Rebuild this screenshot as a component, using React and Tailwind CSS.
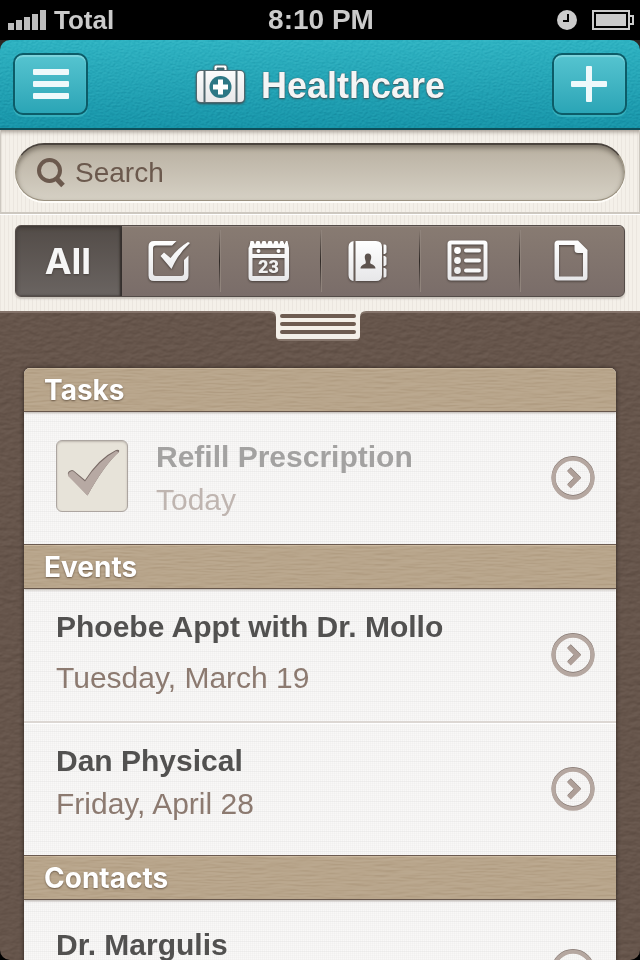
import React, { useState } from 'react';

const STRIPES = "bg-[#f4f0e9] bg-[repeating-linear-gradient(90deg,#ebe6df_0px,#ebe6df_1px,#f4f0e9_1px,#f4f0e9_4px)]";
const LINEN = "bg-[#f9f8f7] bg-[repeating-linear-gradient(0deg,#8080800c_0px,#8080800c_1px,transparent_1px,transparent_10px),repeating-linear-gradient(90deg,#80808009_0px,#80808009_1px,transparent_1px,transparent_2px),repeating-linear-gradient(0deg,#80808009_0px,#80808009_1px,transparent_1px,transparent_2px)]";

// Grain laid over a flat panel colour
const Grain = ({ id, freq, className }) => (
  <svg className={`absolute inset-0 w-full h-full pointer-events-none ${className}`} aria-hidden="true">
    <filter id={id} x="0" y="0" width="100%" height="100%" colorInterpolationFilters="sRGB">
      <feTurbulence type="fractalNoise" baseFrequency={freq} numOctaves="3" seed="4" />
      <feDiffuseLighting lightingColor="#ffffff" surfaceScale="1.5">
        <feDistantLight azimuth="70" elevation="30" />
      </feDiffuseLighting>
    </filter>
    <rect width="100%" height="100%" filter={`url(#${id})`} />
  </svg>
);

const IconDefs = () => (
  <svg className="absolute w-0 h-0" aria-hidden="true">
    <defs>
      <linearGradient id="ink" gradientUnits="userSpaceOnUse" x1="0" y1="0" x2="0" y2="42">
        <stop offset="0" stopColor="#ffffff" />
        <stop offset="1" stopColor="#e6e6e8" />
      </linearGradient>
    </defs>
  </svg>
);

const StatusBar = () => (
  <div className="grid grid-cols-3 items-center h-10 shrink-0 pl-2 pr-1.5 bg-black text-[#cbcbcb] font-bold">
    <div className="flex items-center gap-2">
      <svg width="38" height="20" viewBox="0 0 38 20" fill="#bdbdbd">
        <path d="M0 13h6v7H0zM8 10h6v10H8zM16 7h6v13h-6zM24 4h6v16h-6zM32 0h6v20h-6z" />
      </svg>
      <span className="text-[26px] leading-10">Total</span>
    </div>
    <span className="text-[28px] leading-10 text-center whitespace-nowrap">8:10 PM</span>
    <div className="flex items-center justify-end gap-[15px]">
      <svg width="20" height="20" viewBox="0 0 20 20">
        <circle cx="10" cy="10" r="10" fill="#cbcbcb" />
        <path d="M11 4v7H6" fill="none" stroke="#000" strokeWidth="2" />
      </svg>
      <svg width="42" height="20" viewBox="0 0 42 20">
        <path d="M1 1h36v5h4v8h-4v5H1z" fill="none" stroke="#cbcbcb" strokeWidth="2" />
        <path d="M37 6v8" stroke="#cbcbcb" strokeWidth="2" />
        <path d="M4 4h30v12H4z" fill="#cbcbcb" />
      </svg>
    </div>
  </div>
);

const HeaderButton = ({ label, onClick, children }) => (
  <button
    type="button"
    aria-label={label}
    onClick={onClick}
    className="relative flex items-center justify-center w-[75px] h-[62px] rounded-[10px] border-2 border-[#0c5c68] bg-linear-to-b from-[#55c4d0] to-[#2aa5b6] shadow-[inset_0_2px_1px_#7fd5dd,0_2px_0_#35b0be]"
  >
    {children}
  </button>
);

const Header = () => (
  <div className="bg-[#2b2522] shrink-0">
    <header className="relative flex items-center justify-between h-[90px] px-[13px] rounded-t-[10px] border-b-2 border-[#0d4f5a] overflow-hidden bg-linear-to-b from-[#2fb3c2] to-[#1795a9]">
      <Grain id="cloth" freq="0.4 0.6" className="mix-blend-soft-light opacity-20" />
      <HeaderButton label="Menu">
        <svg width="36" height="30" viewBox="0 0 36 30" fill="#eef9fb">
          <rect width="36" height="6" rx="1" />
          <rect y="12" width="36" height="6" rx="1" />
          <rect y="24" width="36" height="6" rx="1" />
        </svg>
      </HeaderButton>
      <h1 className="relative flex items-center gap-3.5 text-4xl font-bold text-[#f4f5f5] [text-shadow:0_1px_2px_#3b4a50,0_0_1px_#3b4a50]">
        <svg width="52" height="40" viewBox="0 0 52 40" className="drop-shadow-[0_1px_1px_#3b4a50]">
          <path d="M19 8V3q0-2 2-2h9q2 0 2 2v5h-3V4h-7v4z" fill="#fff" stroke="#496a72" strokeWidth="1" />
          <rect x="1" y="6" width="49" height="33" rx="5" fill="#52676e" />
          <path d="M8.500 7v31H6Q2 38 2 34V11q0-4 4-4zM42.500 7v31H45q4 0 4-4V11q0-4-4-4z" fill="url(#ink)" />
          <path d="M10.500 7h30v31h-30z" fill="url(#ink)" />
          <circle cx="25.500" cy="23" r="11" fill="#2c7785" />
          <path d="M23 15.500h5v5h5v5h-5v5h-5v-5h-5v-5h5z" fill="#fff" />
        </svg>
        <span className="pt-1">Healthcare</span>
      </h1>
      <HeaderButton label="Add">
        <svg width="36" height="36" viewBox="0 0 36 36" fill="#eef9fb">
          <rect x="15" width="6" height="36" rx="1" />
          <rect y="15" width="36" height="6" rx="1" />
        </svg>
      </HeaderButton>
    </header>
  </div>
);

const SearchBar = () => {
  const [query, setQuery] = useState("");

  return (
    <div className={`px-3.5 pt-[13px] pb-[11px] shrink-0 border-x border-b-2 border-[#cdc8c0] shadow-[inset_0_5px_4px_-3px_#a39b92] ${STRIPES}`}>
      <label className="flex items-center gap-2.5 h-[58px] pl-[21px] pr-5 rounded-full border border-t-2 border-[#99907f] border-t-[#4b443e] bg-linear-to-b from-[#b9b0a1] to-[#d5d0c4] shadow-[inset_0_3px_5px_#7c7468,0_2px_0_#fffdf9]">
        <svg width="28" height="30" viewBox="0 0 28 30" fill="none" stroke="#6b594d" className="shrink-0">
          <circle cx="12.500" cy="12.500" r="10.500" strokeWidth="4" />
          <path d="M19 20l7 7.500" strokeWidth="5" />
        </svg>
        <input
          type="search"
          aria-label="Search"
          placeholder="Search"
          className="w-full bg-transparent text-[28px] leading-9 text-[#6b594d] placeholder:text-[#6b594d] outline-none appearance-none"
          value={query}
          onChange={e => setQuery(e.target.value)}
        />
      </label>
    </div>
  );
};

const TaskIcon = () => (
  <svg width="42" height="42" viewBox="0 0 42 42">
    <path d="M28.500 1L24 5.500H8Q5 5.500 5 8.500v24.500q0 3 3 3h25q3 0 3-3V20l4.500-4.500v20q0 5.500-5.500 5.500H6Q.5 41 .5 35.500V6.500Q.5 1 6 1z" fill="url(#ink)" />
    <path d="M12.500 16l3.500-3.500 6.500 5.500Q30 8 40 2l2 1Q30.500 13 23.500 29z" fill="url(#ink)" />
  </svg>
);

const CalendarIcon = () => (
  <svg width="42" height="42" viewBox="0 0 42 42">
    <path d="M1.500 6l1-5h3l1.500 3.500L8.500 1h3L13 4.500 14.500 1h3L19 4.500 20.500 1h3L25 4.500 26.500 1h3L31 4.500 32.500 1h2.500l1.500 3.500L38 1h1.500l1.500 7v29q0 4-4 4H4.500q-4 0-4-4V8zM4.500 8v6h32V8zM4.500 18v18h32V18z" fill="url(#ink)" fillRule="evenodd" />
    <circle cx="10.500" cy="11" r="2" fill="#fff" />
    <circle cx="30.500" cy="11" r="2" fill="#fff" />
    <text x="20.500" y="33" textAnchor="middle" className="font-['Roboto',sans-serif] text-[18px] font-black" fill="#f2f2f2">23</text>
  </svg>
);

const ContactIcon = () => (
  <svg width="40" height="42" viewBox="0 0 40 42">
    <path d="M5.500 1v40H5Q.5 40 .5 35V7Q.5 2 5.500 1zM7.500 1H28q6 0 6 6v28q0 6-6 6H7.500zM35.500 4.500h1.500q1.500 0 1.500 2v6L37 14h-1.500zM35.500 16h1.500l1.500 1.500v7L37 26h-1.500zM35.500 28h1.500l1.500 1.500v6q0 2-1.500 2h-1.500z" fill="url(#ink)" />
    <path d="M20 13.500c2.500 0 3.500 2 3.200 4.500-.2 2-1.200 3-1 5 .3 1.500 5.300 1.500 5.300 5.500h-15c0-4 5-4 5.300-5.500.2-2-.8-3-1-5-.3-2.500.7-4.500 3.200-4.500z" fill="#5d534e" />
  </svg>
);

const ListIcon = () => (
  <svg width="42" height="42" viewBox="0 0 42 42">
    <path d="M4 .500h33q3.500 0 3.500 3.500v33q0 3.500-3.500 3.500H4Q.5 40.500.5 37V4Q.5.500 4 .500zM4.500 4.500v32h32v-32z" fill="url(#ink)" fillRule="evenodd" />
    <circle cx="10.500" cy="10.500" r="3.400" fill="#fff" />
    <circle cx="10.500" cy="20.500" r="3.400" fill="#f6f6f6" />
    <circle cx="10.500" cy="30.500" r="3.400" fill="#eee" />
    <path d="M19 10.500h13M19 20.500h13M19 30.500h13" stroke="#f8f8f8" strokeWidth="4" strokeLinecap="round" />
  </svg>
);

const FileIcon = () => (
  <svg width="34" height="42" viewBox="0 0 34 42">
    <path d="M4 .500h20l9.500 9.500v27q0 3.500-3.500 3.500H4Q.5 40.500.5 37V4Q.5.500 4 .500zM5 5v31.500h24V13h-5q-3.500 0-3.500-3.500V5z" fill="url(#ink)" fillRule="evenodd" />
  </svg>
);

const FILTERS = [
  { name: "All" },
  { name: "Tasks", Icon: TaskIcon },
  { name: "Events", Icon: CalendarIcon },
  { name: "Contacts", Icon: ContactIcon },
  { name: "Lists", Icon: ListIcon },
  { name: "Files", Icon: FileIcon },
];

const FilterBar = () => {
  const [active, setActive] = useState("All");

  return (
    <div className={`relative z-10 px-[15px] pt-2.5 pb-3.5 shrink-0 border-t border-white ${STRIPES}`}>
      <div className="grid grid-cols-[106fr_98fr_101fr_99fr_101fr_105fr] h-[72px] rounded-md border border-[#544c48] overflow-hidden bg-linear-to-b from-[#887b72] to-[#7a6d69] shadow-[0_2px_2px_#c9c3bb]">
        {FILTERS.map(({ name, Icon }, i) => (
          <button
            key={name}
            type="button"
            aria-label={name}
            onClick={() => setActive(name)}
            className={`relative flex items-center justify-center pr-0.5 ${active === name ? "bg-linear-to-b from-[#534c48] to-[#6a6461] shadow-[inset_0_2px_4px_#3f3936,inset_-2px_0_2px_#2c2725]" : "shadow-[inset_0_1px_0_#9a8e86]"}`}
          >
            {i > 1 && <span className="absolute left-0 inset-y-1 w-px bg-linear-to-b from-transparent via-[#2e2825] to-transparent shadow-[1px_0_0_#8f837b]" />}
            <span className="drop-shadow-[0_1px_1px_#463e3a]">
              {Icon ? <Icon /> : <span className="font-['Inter',sans-serif] text-4xl font-bold text-[#f6f6f6]">{name}</span>}
            </span>
          </button>
        ))}
      </div>
      <div className="absolute inset-x-0 top-full flex justify-center pr-1 border-t-2 border-[#84736a]">
        <svg width="96" height="32" viewBox="0 0 96 32" className="-mt-0.5">
          <path d="M0 0h96v2q-6 0-6 6v17q0 5-5 5H11q-5 0-5-5V8q0-6-6-6z" fill="#85756b" />
          <path d="M0 0h96q-6 0-6 6v19q0 3-3 3H9q-3 0-3-3V6q0-6-6-6z" fill="#f4f0e9" />
          <path d="M12 5h72M12 13h72M12 21h72" stroke="#6e5c51" strokeWidth="4" strokeLinecap="round" />
        </svg>
      </div>
    </div>
  );
};

const SECTIONS = [
  {
    title: "Tasks",
    items: [{ title: "Refill Prescription", sub: "Today", done: true, pad: "pt-[23px]" }],
  },
  {
    title: "Events",
    items: [
      { title: "Phoebe Appt with Dr. Mollo", sub: "Tuesday, March 19", pad: "pt-4 gap-2" },
      { title: "Dan Physical", sub: "Friday, April 28", pad: "pt-4" },
    ],
  },
  {
    title: "Contacts",
    items: [{ title: "Dr. Margulis", pad: "pt-[23px]", tall: true }],
  },
];

const Row = ({ item }) => {
  const [done, setDone] = useState(item.done);

  return (
    <li className={`flex items-center box-content pl-8 pr-[21px] border-b-2 border-[#dcd7d3] last:border-b-0 shadow-[inset_0_1px_0_#ffffff] ${item.tall ? "h-[142px]" : "h-[132px]"}`}>
      {item.done !== undefined && (
        <span className="relative mr-7 mb-1 w-[72px] h-[72px] shrink-0">
          <input
            type="checkbox"
            aria-label={item.title}
            checked={done}
            onChange={() => setDone(!done)}
            className="appearance-none block w-full h-full rounded-md border border-[#aca5a0] bg-[#e7e3d9] shadow-[inset_0_1px_2px_#bdb6ae]"
          />
          {done && (
            <svg width="54" height="48" viewBox="0 0 54 48" className="absolute left-[11px] top-[9px] pointer-events-none">
              <path d="M1 26q-1-4 4-5l1.500.5L18 31Q32 9 49 1q4-1 3 2Q38 15 20.500 46.500z" fill="#796b66" />
              <path d="M1 27q0-4 4-5l1.500.5L18 32.500Q32 11 49 2l3 1Q38 15 20.500 46.500z" fill="#b7a9a3" />
            </svg>
          )}
        </span>
      )}
      <div className={`flex flex-col flex-1 self-start text-3xl/[43px] whitespace-nowrap ${item.pad}`}>
        <span className={`font-bold ${done ? "text-[#a3a2a1]" : "text-[#525150]"}`}>{item.title}</span>
        {item.sub && <span className={done ? "text-[#bfb5b0]" : "text-[#8c7a70]"}>{item.sub}</span>}
      </div>
      <a href="#" aria-label={`Open ${item.title}`} className="shrink-0">
        <svg width="44" height="44" viewBox="0 0 44 44" fill="none">
          <circle cx="22" cy="21.500" r="19.500" stroke="#857872" strokeWidth="4" />
          <circle cx="22" cy="22.200" r="19.500" stroke="#b5a7a0" strokeWidth="4" />
          <path d="M18 13l8.500 8.500-8.500 8.500" stroke="#857872" strokeWidth="5" />
          <path d="M18 13.700l8.500 8.500-8.500 8.500" stroke="#ae9f98" strokeWidth="5" />
        </svg>
      </a>
    </li>
  );
};

const Section = ({ section }) => (
  <section className="border-t border-[#66564b] first:border-t-0">
    <div className="relative h-11 border-b border-[#66564b] bg-[#b8a58b] shadow-[inset_0_1px_0_#cbb99f,0_1px_2px_#b5aea8]">
      <Grain id={`kraft-${section.title}`} freq="0.04 0.6" className="mix-blend-soft-light opacity-15" />
      <h2 className="relative pl-5 font-['Inter',sans-serif] text-[28px] leading-11 font-bold text-white [text-shadow:0_1px_2px_#6b5a48]">
        {section.title}
      </h2>
    </div>
    <ul>
      {section.items.map(item => <Row key={item.title} item={item} />)}
    </ul>
  </section>
);

export default function App() {
  return (
    <div className="flex flex-col h-screen overflow-hidden bg-black font-['Liberation_Sans',Arial,sans-serif]">
      <IconDefs />
      <StatusBar />
      <Header />
      <SearchBar />
      <FilterBar />
      <main className="relative flex-1 min-h-0 px-6 pt-[57px] overflow-hidden rounded-b-[10px] bg-[#66554b]">
        <Grain id="leather" freq="0.12 0.22" className="mix-blend-soft-light opacity-15" />
        <div className={`relative rounded-t-md overflow-hidden shadow-[0_0_4px_#2b211c] ${LINEN}`}>
          {SECTIONS.map(section => <Section key={section.title} section={section} />)}
        </div>
      </main>
    </div>
  );
}
